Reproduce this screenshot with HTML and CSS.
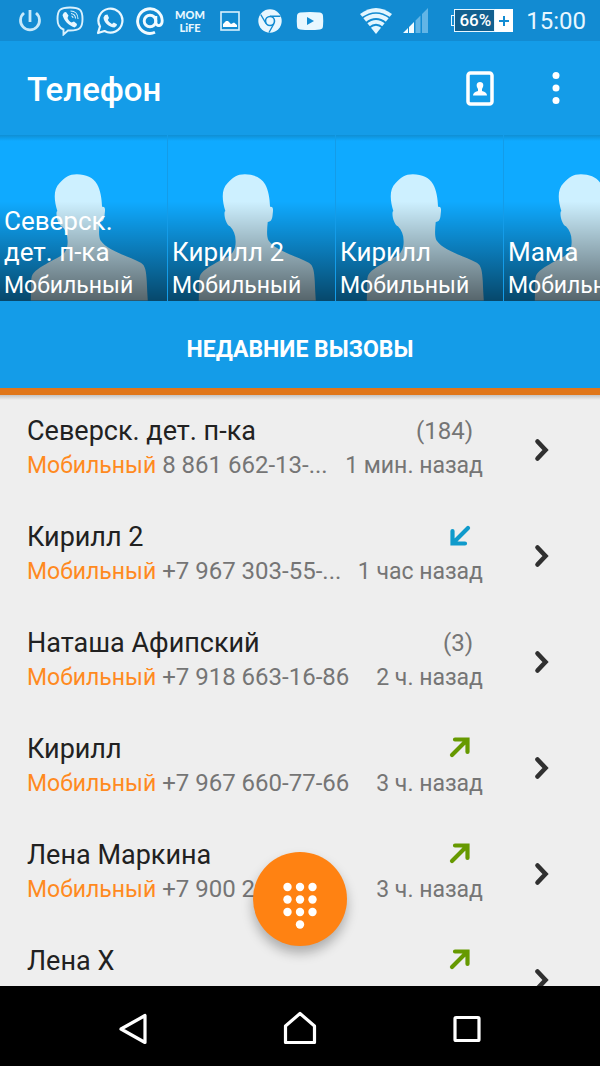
FILE: index.html
```html
<!DOCTYPE html>
<html lang="ru">
<head>
<meta charset="utf-8">
<meta name="viewport" content="width=device-width, initial-scale=1">
<title>Телефон</title>
<link rel="stylesheet" href="styles.css">
</head>
<body>
<svg class="defs" aria-hidden="true">
  <symbol id="person" viewBox="0 0 504 498">
    <path d="M93 498C94 470 92 440 96 425C102 408 122 398 145 384C175 366 206 362 204 318C204 300 198 285 187 274C177 272 168 243 171 230L173 228C163 195 160 162 180 143C196 126 208 117 232 117C260 118 281 126 293 147C303 164 307 190 308 215C318 214 318 222 316 236C315 252 312 260 301 261C299 280 297 305 303 316C325 349 385 362 425 384C439 392 441 410 443 440Q444 470 446 498Z"/>
  </symbol>
  <symbol id="chevron" viewBox="0 0 16 24"><path d="M3.500 3.500L11.500 12L3.500 20.500" fill="none" stroke="currentColor" stroke-width="4.600" stroke-linecap="round" stroke-linejoin="miter"/></symbol>
  <symbol id="incoming" viewBox="0 0 22 22"><path d="M19 3L5 17M3.500 6V18.500H16" fill="none" stroke="currentColor" stroke-width="4.200" stroke-linecap="round"/></symbol>
  <symbol id="outgoing" viewBox="0 0 22 22"><path d="M3 19L17 5M6 3.500H18.500V16" fill="none" stroke="currentColor" stroke-width="4.200" stroke-linecap="round"/></symbol>
</svg>

<div class="status">
  <div class="notices">
    <span class="notice"><svg width="28" height="28" viewBox="0 0 28 28"><path d="M8 6A9.500 9.500 0 1 0 20 6M14 3V15" fill="none" stroke="#c6e9fa" stroke-width="2.800"/></svg></span>
    <span class="notice"><svg width="28" height="30" viewBox="0 0 28 30"><path d="M14 1.500C4 1.500 1.500 4 1.500 13C1.500 19 3 22 7.500 23.500V28.500L12 24.500C24 25 26.500 22 26.500 13C26.500 4 24 1.500 14 1.500Z" fill="none" stroke="#d9f1fd" stroke-width="1.900"/><path d="M8 6.500L10 6L12.500 9.500L11.500 12C12.500 14.500 13.500 15.500 15.500 16.500L18 15.500L21 18L20.500 20L18.500 21.500C12 19 8 14.500 6.500 9Z" fill="#e8f7ff"/><path d="M14.500 5C19 5 22 8 22 13M15 7.500C18 8 19.500 9.500 19.500 12.500M15.500 10Q17 10.500 17 12" fill="none" stroke="#d9f1fd" stroke-width="1.100"/></svg></span>
    <span class="notice"><svg width="28" height="28" viewBox="0 0 28 28"><path d="M2 26L4 19.500A12 12 0 1 1 8.500 24Z" fill="none" stroke="#e8f7ff" stroke-width="2.200" stroke-linejoin="round"/><path d="M9 8L11.500 7.500L13 11L11.800 13Q13 15.800 16 17L17.800 15.500L21 17.200Q21 20 18.500 20.500C13 20.500 7.500 15 7.500 10.500Z" fill="#e8f7ff"/></svg></span>
    <span class="notice"><svg width="30" height="30" viewBox="0 0 30 30"><g fill="none" stroke="#f2fbff" stroke-width="2.900"><circle cx="15" cy="15" r="5.800"/><path d="M20.800 10V16C20.800 21 27.200 21 27.200 14.500A12.300 12.300 0 1 0 20 26.300"/></g></svg></span>
    <span class="notice mom"><span>MOM</span><span>LiFE</span></span>
    <span class="notice"><svg width="22" height="22" viewBox="0 0 22 22"><rect x="2" y="2" width="18" height="18" fill="none" stroke="#d9f1fd" stroke-width="1.600"/><path d="M4 17V14L7 11L9 11L12 14L15 12.500L18 15V17Z" fill="#fff"/></svg></span>
    <span class="notice"><svg width="24" height="24" viewBox="0 0 24 24"><circle cx="12" cy="12" r="11.700" fill="#e8f7ff"/><circle cx="12" cy="12" r="4.500" fill="#e8f7ff" stroke="#128bd2" stroke-width="1.600"/><path d="M12 7.200H22.500M8 14.500L2.700 5.500M16 14.500L11 23.500" stroke="#128bd2" stroke-width="1.400"/></svg></span>
    <span class="notice"><svg width="28" height="20" viewBox="0 0 28 20"><path d="M4 1.500Q14 .5 24 1.500Q27 2 27 5Q27.500 10 27 15Q27 18 24 18.500Q14 19.500 4 18.500Q1 18 1 15Q.5 10 1 5Q1 2 4 1.500ZM11 6V14L18 10Z" fill="#e8f7ff" fill-rule="evenodd"/></svg></span>
  </div>
  <div class="system">
    <svg width="34" height="28" viewBox="0 0 34 28"><path d="M17 27L1 7Q17-5 33 7Z" fill="#e3f6ff"/><path d="M3 11Q17 1 31 11M7 16Q17 8 27 16M10.500 20.500Q17 15 23.500 20.500" fill="none" stroke="#128bd2" stroke-width="1.700"/></svg>
    <svg width="26" height="26" viewBox="0 0 26 26"><path d="M0 25L5 20V25ZM6 19L11 14V25H6Z" fill="#f2fbff"/><path d="M12.500 12.500L17.500 7.500V25H12.500ZM19 6L25 0V25H19Z" fill="#62b5e6"/></svg>
    <span class="battery"><span class="nub"></span><span class="charge">66%</span><span class="plus"><svg width="12" height="12" viewBox="0 0 12 12"><path d="M6 1V11M1 6H11" stroke="#128bd2" stroke-width="2"/></svg></span></span>
    <time class="clock">15:00</time>
  </div>
</div>

<header class="appbar">
  <h1 class="title">Телефон</h1>
  <button class="tool" aria-label="Контакты"><svg width="28" height="36" viewBox="0 0 28 36"><rect x="2" y="3" width="24" height="31" rx="2.500" fill="none" stroke="#fff" stroke-width="3.500"/><path d="M14 12C18 12 18 16 16 19V21Q21 22 21 25.500H7Q7 22 12 21V19C10 16 10 12 14 12Z" fill="#fff"/></svg></button>
  <button class="tool" aria-label="Меню"><svg width="8" height="34" viewBox="0 0 8 34"><g fill="#fff"><circle cx="4" cy="4.500" r="3.500"/><circle cx="4" cy="17" r="3.500"/><circle cx="4" cy="29.500" r="3.500"/></g></svg></button>
</header>

<section class="favorites">
  <button class="tile"><svg class="person"><use href="#person"/></svg><span class="shade"><span class="tile-name">Северск. дет. п-ка</span><span class="tile-kind">Мобильный</span></span></button>
  <button class="tile"><svg class="person"><use href="#person"/></svg><span class="shade"><span class="tile-name">Кирилл 2</span><span class="tile-kind">Мобильный</span></span></button>
  <button class="tile"><svg class="person"><use href="#person"/></svg><span class="shade"><span class="tile-name">Кирилл</span><span class="tile-kind">Мобильный</span></span></button>
  <button class="tile"><svg class="person"><use href="#person"/></svg><span class="shade"><span class="tile-name">Мама</span><span class="tile-kind">Мобильный</span></span></button>
</section>

<button class="tab">НЕДАВНИЕ ВЫЗОВЫ</button>

<main class="calls">
  <ul class="list">
    <li class="call"><div class="info"><div class="line"><span class="name">Северск. дет. п-ка</span><span class="mark">(184)</span></div><div class="line sub"><span class="number"><span class="kind">Мобильный</span> 8 861 662-13-...</span><span class="ago">1 мин. назад</span></div></div><button class="more" aria-label="Подробнее"><svg width="16" height="24"><use href="#chevron"/></svg></button></li>
    <li class="call"><div class="info"><div class="line"><span class="name">Кирилл 2</span><span class="mark in"><svg width="22" height="22"><use href="#incoming"/></svg></span></div><div class="line sub"><span class="number"><span class="kind">Мобильный</span> +7 967 303-55-...</span><span class="ago">1 час назад</span></div></div><button class="more" aria-label="Подробнее"><svg width="16" height="24"><use href="#chevron"/></svg></button></li>
    <li class="call"><div class="info"><div class="line"><span class="name">Наташа Афипский</span><span class="mark">(3)</span></div><div class="line sub"><span class="number"><span class="kind">Мобильный</span> +7 918 663-16-86</span><span class="ago">2 ч. назад</span></div></div><button class="more" aria-label="Подробнее"><svg width="16" height="24"><use href="#chevron"/></svg></button></li>
    <li class="call"><div class="info"><div class="line"><span class="name">Кирилл</span><span class="mark out"><svg width="22" height="22"><use href="#outgoing"/></svg></span></div><div class="line sub"><span class="number"><span class="kind">Мобильный</span> +7 967 660-77-66</span><span class="ago">3 ч. назад</span></div></div><button class="more" aria-label="Подробнее"><svg width="16" height="24"><use href="#chevron"/></svg></button></li>
    <li class="call"><div class="info"><div class="line"><span class="name">Лена Маркина</span><span class="mark out"><svg width="22" height="22"><use href="#outgoing"/></svg></span></div><div class="line sub"><span class="number"><span class="kind">Мобильный</span> +7 900 2</span><span class="ago">3 ч. назад</span></div></div><button class="more" aria-label="Подробнее"><svg width="16" height="24"><use href="#chevron"/></svg></button></li>
    <li class="call"><div class="info"><div class="line"><span class="name">Лена Х</span><span class="mark out"><svg width="22" height="22"><use href="#outgoing"/></svg></span></div></div><button class="more" aria-label="Подробнее"><svg width="16" height="24"><use href="#chevron"/></svg></button></li>
  </ul>
  <button class="dial" aria-label="Набор номера"><svg width="36" height="48" viewBox="0 0 36 48"><g fill="#fff"><circle cx="5.500" cy="5" r="4.200"/><circle cx="18" cy="5" r="4.200"/><circle cx="30.500" cy="5" r="4.200"/><circle cx="5.500" cy="17.500" r="4.200"/><circle cx="18" cy="17.500" r="4.200"/><circle cx="30.500" cy="17.500" r="4.200"/><circle cx="5.500" cy="30" r="4.200"/><circle cx="18" cy="30" r="4.200"/><circle cx="30.500" cy="30" r="4.200"/><circle cx="18" cy="42.500" r="4.200"/></g></svg></button>
</main>

<nav class="nav">
  <button class="key" aria-label="Назад"><svg width="34" height="36" viewBox="0 0 34 36"><path d="M29 4.500V31.500L5 18Z" fill="none" stroke="#fff" stroke-width="3.200" stroke-linejoin="round"/></svg></button>
  <button class="key" aria-label="Домой"><svg width="34" height="36" viewBox="0 0 34 36"><path d="M2.500 31.500V15L17 2.500L31.500 15V31.500Z" fill="none" stroke="#fff" stroke-width="3.200" stroke-linejoin="round"/></svg></button>
  <button class="key" aria-label="Недавние приложения"><svg width="34" height="36" viewBox="0 0 34 36"><rect x="5" y="6.500" width="24" height="23" rx="1" fill="none" stroke="#fff" stroke-width="3.200"/></svg></button>
</nav>
</body>
</html>
```
FILE: styles.css
```css
* { box-sizing: border-box; }

body {
  margin: 0;
  height: 100vh;
  display: flex;
  flex-direction: column;
  overflow: hidden;
  background: #eeeeee;
  font-family: Roboto, "Noto Sans", sans-serif;
}

button {
  margin: 0;
  padding: 0;
  border: 0;
  background: none;
  color: inherit;
  font: inherit;
}

svg { display: block; }

.defs { position: absolute; width: 0; height: 0; }

.status {
  flex: none;
  height: 41px;
  padding: 0 14px 0 10px;
  display: flex;
  align-items: center;
  justify-content: space-between;
  background: #128bd2;
  color: #e8f7ff;
}

.notices { display: flex; }

.notice {
  width: 40px;
  height: 40px;
  display: flex;
  align-items: center;
  justify-content: center;
}

.mom {
  flex-direction: column;
  font: 900 11px/13px Lato, sans-serif;
}

.system { display: flex; align-items: center; gap: 10px; }

.battery {
  display: flex;
  align-items: center;
  margin-left: 12px;
  font-size: 17px;
  font-weight: 500;
  line-height: 21px;
}

.nub {
  width: 3px;
  height: 11px;
  border: 1px solid #e8f7ff;
  border-right: 0;
}

.charge {
  padding: 0 3px 0 4px;
  border: 1px solid #e8f7ff;
  background: #12608f;
  color: #fff;
}

.plus {
  height: 23px;
  padding: 0 3px;
  display: flex;
  align-items: center;
  background: #fff;
}

.clock { margin-left: 3px; font-size: 24px; line-height: 40px; }

.appbar {
  flex: none;
  height: 94px;
  padding: 0 16px 0 27px;
  display: flex;
  align-items: center;
  background: #149ce8;
  color: #fff;
}

.title {
  flex: 1;
  margin: 0;
  padding-top: 4px;
  font-size: 33px;
  line-height: 40px;
  font-weight: 500;
}

.tool {
  width: 56px;
  height: 56px;
  margin-left: 20px;
  display: flex;
  align-items: center;
  justify-content: center;
}

.tool:first-of-type { margin-left: 0; }

.favorites {
  flex: none;
  height: 166px;
  display: flex;
  gap: 1px;
  overflow: hidden;
  background: #149ce8;
}

.tile {
  flex: none;
  width: 167px;
  display: grid;
  background: linear-gradient(#0f8fd4, #0faaff 6px);
  color: #fff;
  text-align: left;
}

.person, .shade { grid-area: 1 / 1; }

.person { width: 167px; height: 166px; fill: #cdf0ff; }

.shade {
  padding: 0 4px;
  display: flex;
  flex-direction: column;
  justify-content: flex-end;
  background: linear-gradient(transparent 40%, rgba(0, 0, 0, .58));
}

.tile-name { font-size: 26px; line-height: 31px; }

.tile-kind { padding-top: 2px; font-size: 23px; line-height: 31px; }

.tab {
  flex: none;
  height: 94px;
  padding-top: 9px;
  border-bottom: 7px solid #e0761a;
  background: #149ce8;
  color: #fff;
  font-size: 23px;
  font-weight: 700;
  text-align: center;
  text-transform: uppercase;
}

.calls {
  position: relative;
  flex: 1;
  min-height: 0;
  overflow: hidden;
  background: linear-gradient(#c4c4c4, #eeeeee 5px);
}

.list { margin: 0; padding: 2px 0 0; list-style: none; }

.call { height: 106px; display: flex; align-items: flex-start; }

.info { flex: 1; min-width: 0; padding: 16px 0 0 27px; }

.line {
  display: flex;
  justify-content: space-between;
  align-items: center;
  white-space: nowrap;
  height: 36px;
}

.sub { height: 32px; color: #757575; font-size: 23px; }

.number { font-size: 24px; }

.name { color: #212121; font-size: 27px; }

.mark { padding-right: 10px; color: #757575; font-size: 24px; }

.in { padding: 0 12px 2px 0; color: #0f9acb; }

.out { padding: 0 12px 4px 0; color: #669900; }

.kind { color: #ff8a1f; font-size: 23px; }

.more {
  width: 117px;
  height: 106px;
  display: flex;
  align-items: center;
  justify-content: center;
  color: #303030;
}

.dial {
  position: absolute;
  left: calc(50% - 47px);
  bottom: 40px;
  width: 94px;
  height: 94px;
  padding-top: 13px;
  border-radius: 50%;
  background: #ff8212;
  box-shadow: 0 7px 12px rgba(0, 0, 0, .28);
  display: flex;
  align-items: center;
  justify-content: center;
}

.nav {
  flex: none;
  height: 80px;
  padding: 5px 50px 0;
  display: flex;
  align-items: center;
  background: #000;
}

.key { flex: 1; display: flex; align-items: center; justify-content: center; }
```
